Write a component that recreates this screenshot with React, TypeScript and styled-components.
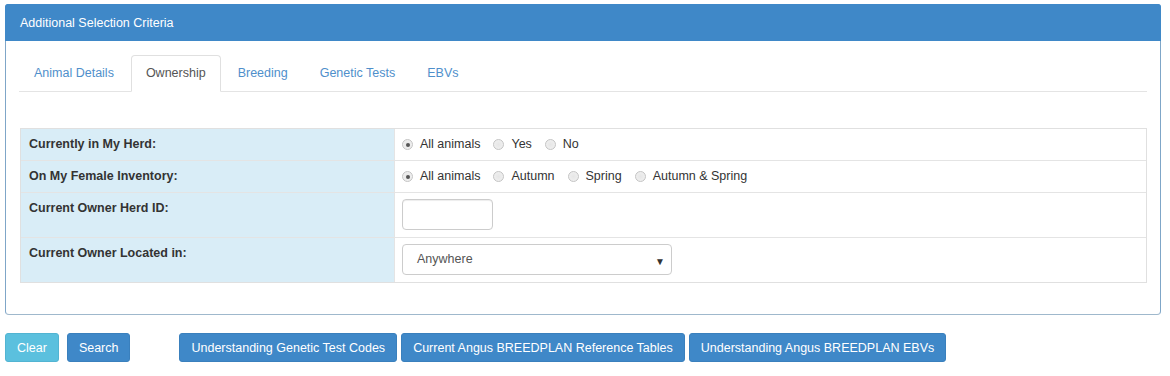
import styled, { createGlobalStyle } from "styled-components"

const GlobalStyle = createGlobalStyle`
  html, body {
    margin: 0;
    padding: 0;
    background: #fff;
    font-family: "Liberation Sans", Arial, sans-serif;
    font-size: 12.5px;
    color: #333;
  }
  * { box-sizing: border-box; }
`

const tabs = ["Animal Details", "Ownership", "Breeding", "Genetic Tests", "EBVs"]

type RadioRow = { kind: "radio"; label: string; options: string[] }
type InputRow = { kind: "input"; label: string }
type SelectRow = { kind: "select"; label: string; value: string }
type Row = RadioRow | InputRow | SelectRow

const rows: Row[] = [
  { kind: "radio", label: "Currently in My Herd:", options: ["All animals", "Yes", "No"] },
  {
    kind: "radio",
    label: "On My Female Inventory:",
    options: ["All animals", "Autumn", "Spring", "Autumn & Spring"],
  },
  { kind: "input", label: "Current Owner Herd ID:" },
  { kind: "select", label: "Current Owner Located in:", value: "Anywhere" },
]

const App = () => {
  return (
    <Page>
      <GlobalStyle />
      <Panel>
        <PanelHeading>Additional Selection Criteria</PanelHeading>
        <PanelBody>
          <TabBar>
            {tabs.map((t) => (
              <Tab key={t} $active={t === "Ownership"}>
                {t}
              </Tab>
            ))}
          </TabBar>
          <Table>
            {rows.map((row) => (
              <TableRow key={row.label} $tall={row.kind !== "radio"}>
                <LabelCell>{row.label}</LabelCell>
                <ValueCell $control={row.kind !== "radio"}>
                  {row.kind === "radio" && (
                    <RadioGroup>
                      {row.options.map((o, i) => (
                        <RadioOption key={o}>
                          <RadioDot $checked={i === 0} />
                          {o}
                        </RadioOption>
                      ))}
                    </RadioGroup>
                  )}
                  {row.kind === "input" && <TextInput type="text" />}
                  {row.kind === "select" && <SelectBox>{row.value}</SelectBox>}
                </ValueCell>
              </TableRow>
            ))}
          </Table>
        </PanelBody>
      </Panel>
      <ButtonBar>
        <Button $variant="info">Clear</Button>
        <Button>Search</Button>
        <LinkGroup>
          <Button>Understanding Genetic Test Codes</Button>
          <Button>Current Angus BREEDPLAN Reference Tables</Button>
          <Button>Understanding Angus BREEDPLAN EBVs</Button>
        </LinkGroup>
      </ButtonBar>
    </Page>
  )
}

export default App

const Page = styled.div`
  width: 1170px;
  padding: 4px 9px 0 5px;
`

const Panel = styled.div`
  border: 1px solid #3f88c8;
  border-bottom-color: #9fb8cc;
  border-left-color: #7fa6c8;
  border-right-color: #7fa6c8;
  border-radius: 4px;
  background: #fff;
`

const PanelHeading = styled.div`
  height: 37px;
  margin: -1px -1px 0;
  padding: 0 15px;
  display: flex;
  align-items: center;
  background: #3f88c8;
  color: #fff;
  border-radius: 3px 3px 0 0;
`

const PanelBody = styled.div`
  padding: 14px 13px 31px;
`

const TabBar = styled.div`
  display: flex;
  border-bottom: 1px solid #e4e4e4;
  margin-bottom: 36px;
`

const Tab = styled.div<{ $active?: boolean }>`
  padding: 10px 14px;
  line-height: 15px;
  margin-right: 2px;
  margin-bottom: -1px;
  border: 1px solid ${({ $active }) => ($active ? "#e0e0e0" : "transparent")};
  border-bottom-color: ${({ $active }) => ($active ? "#fff" : "transparent")};
  border-radius: 4px 4px 0 0;
  background: ${({ $active }) => ($active ? "#fff" : "transparent")};
  color: ${({ $active }) => ($active ? "#555" : "#4f8fcb")};
`

const Table = styled.div`
  border: 1px solid #e0e0e0;
  margin-left: 1px;
  width: 1127px;
`

const TableRow = styled.div<{ $tall?: boolean }>`
  display: grid;
  grid-template-columns: 374px 1fr;
  min-height: ${({ $tall }) => ($tall ? "45px" : "32px")};
  border-top: 1px solid #e4e4e4;
  &:first-child {
    border-top: none;
    min-height: 31px;
  }
`

const LabelCell = styled.div`
  background: #d9edf7;
  padding: 8px 8px;
  font-weight: bold;
  line-height: 15px;
  border-right: 1px solid #e4e4e4;
`

const ValueCell = styled.div<{ $control?: boolean }>`
  padding: ${({ $control }) => ($control ? "6px 7px" : "8px 7px")};
  line-height: 15px;
`

const RadioGroup = styled.div`
  display: flex;
  gap: 13px;
`

const RadioOption = styled.label`
  display: flex;
  align-items: center;
  gap: 7px;
  color: #333;
`

const RadioDot = styled.span<{ $checked?: boolean }>`
  width: 11px;
  height: 11px;
  border-radius: 50%;
  border: 1px solid #c4c4c4;
  background: radial-gradient(circle, #e6e6e6 0%, #f2f2f2 100%);
  display: inline-flex;
  align-items: center;
  justify-content: center;
  &::after {
    content: "";
    width: 4px;
    height: 4px;
    border-radius: 50%;
    background: ${({ $checked }) => ($checked ? "#555" : "transparent")};
  }
`

const TextInput = styled.input`
  display: block;
  width: 91px;
  height: 31px;
  border: 1px solid #ccc;
  border-radius: 4px;
  box-shadow: inset 0 1px 1px rgba(0, 0, 0, 0.075);
  font: inherit;
  padding: 6px 12px;
`

const SelectBox = styled.div`
  position: relative;
  width: 270px;
  height: 31px;
  border: 1px solid #ccc;
  border-radius: 4px;
  display: flex;
  align-items: center;
  padding: 0 14px;
  color: #555;
  &::after {
    content: "▼";
    position: absolute;
    right: 6px;
    top: 9px;
    font-size: 10px;
    color: #333;
  }
`

const ButtonBar = styled.div`
  display: flex;
  align-items: center;
  gap: 8px;
  margin-top: 18px;
`

const LinkGroup = styled.div`
  display: flex;
  gap: 4px;
  margin-left: 41px;
`

const Button = styled.button<{ $variant?: "info" }>`
  font: inherit;
  height: 29px;
  padding: 0 11px;
  border-radius: 3px;
  border: 1px solid ${({ $variant }) => ($variant === "info" ? "#52b4d2" : "#3a80bd")};
  background: ${({ $variant }) => ($variant === "info" ? "#5bc0de" : "#3f88c8")};
  color: #fff;
  cursor: pointer;
`
